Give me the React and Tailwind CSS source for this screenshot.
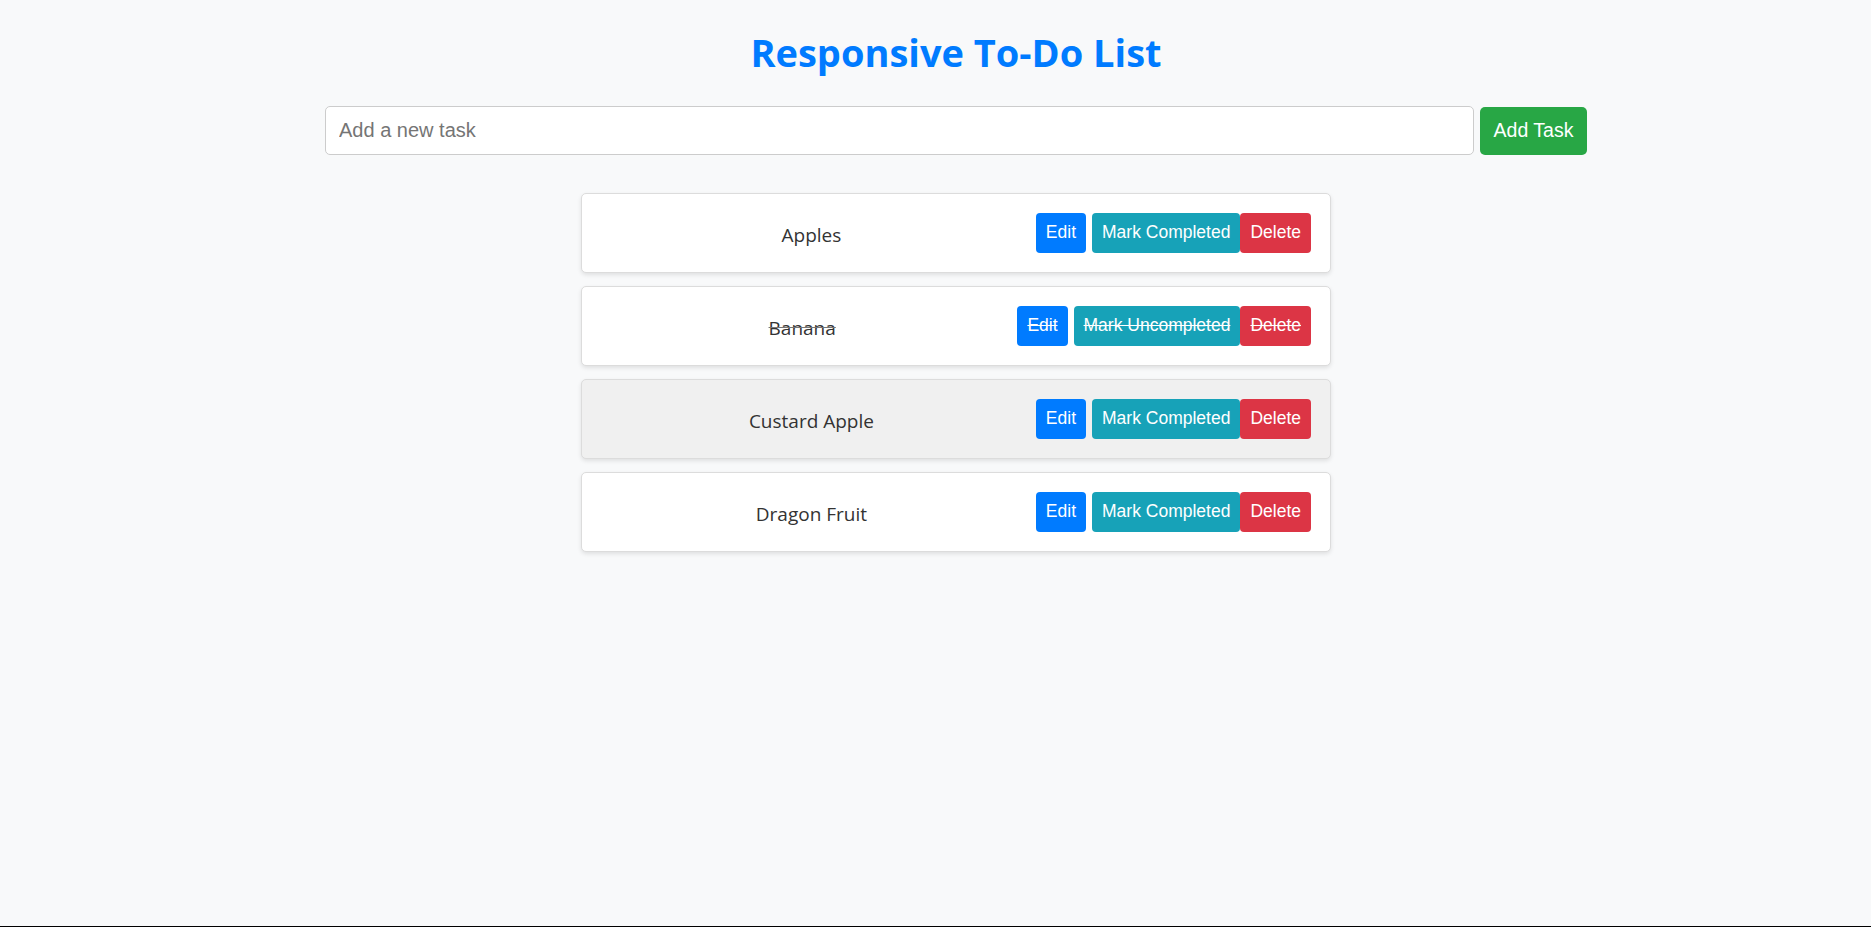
import React from 'react';

const tasks = [
  { id: 1, text: 'Apples', completed: false },
  { id: 2, text: 'Banana', completed: true },
  { id: 3, text: 'Custard Apple', completed: false, hovered: true },
  { id: 4, text: 'Dragon Fruit', completed: false },
];

const btn = 'h-[40px] px-[10px] text-[17.5px] text-white rounded-[4px] font-["Liberation_Sans",Arial,sans-serif] leading-none';

const TaskItem = ({ task }) => {
  const strike = task.completed ? 'line-through' : '';
  return (
    <li
      className={`flex items-center h-[80px] px-[19px] border border-[#dcdcdc] rounded-[5px] shadow-[0_2px_4px_rgba(0,0,0,0.1)] ${
        task.hovered ? 'bg-[#f0f0f0]' : 'bg-white'
      }`}
    >
      <span
        className={`flex-1 mr-[14px] pt-[4px] text-center text-[19px] text-[#333] font-["Open_Sans",sans-serif] ${
          task.completed ? 'line-through decoration-[#777]' : ''
        }`}
      >
        {task.text}
      </span>
      <button className={`${btn} ${strike} bg-[#007bff] mr-[6px]`}>Edit</button>
      <button className={`${btn} ${strike} bg-[#17a2b8]`}>
        {task.completed ? 'Mark Uncompleted' : 'Mark Completed'}
      </button>
      <button className={`${btn} ${strike} bg-[#dc3545]`}>Delete</button>
    </li>
  );
};

export default function App() {
  return (
    <div className="h-[927px] bg-[#f8f9fa] border-b border-black pl-[41px] overflow-hidden">
      <h1 className='pt-[28px] text-center text-[38px] leading-[48px] font-bold text-[#007bff] font-["Open_Sans",sans-serif]'>
        Responsive To-Do List
      </h1>
      <div className="mx-auto w-[1262px] flex gap-[6px] mt-[30px]">
        <input
          type="text"
          placeholder="Add a new task"
          className='flex-1 h-[49px] px-[13px] bg-white border border-[#ccc] rounded-[5px] text-[20px] placeholder-[#757575] font-["Liberation_Sans",Arial,sans-serif] outline-none'
        />
        <button className='w-[107px] h-[48px] mt-[1px] bg-[#28a745] text-white text-[19.5px] rounded-[5px] font-["Liberation_Sans",Arial,sans-serif]'>
          Add Task
        </button>
      </div>
      <ul className="mx-auto w-[750px] mt-[38px] flex flex-col gap-[13px]">
        {tasks.map((task) => (
          <TaskItem key={task.id} task={task} />
        ))}
      </ul>
    </div>
  );
}
